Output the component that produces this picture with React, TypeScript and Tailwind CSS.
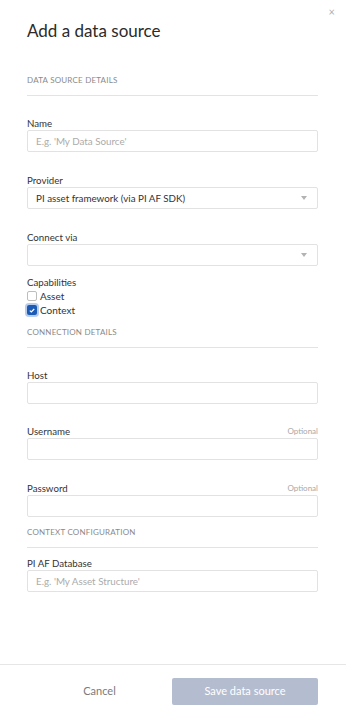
import React from "react";

function SectionHeader({ title }: { title: string }) {
  return <div className="border-b border-[#e3e3e3] pb-[9px] text-[8px] leading-[12px] tracking-[0.2px] text-[#8a8a8a] uppercase">
    {title}
  </div>;
}

interface FieldProps {
  label: string;
  placeholder?: string;
  value?: string;
  optional?: boolean;
  select?: boolean;
  className?: string;
}

function Field({ label, placeholder, value, optional, select, className }: FieldProps) {
  return <div className={className}>
    <div className="flex items-end justify-between h-[14px]">
      <span className="text-[9.7px] leading-[14px] text-[#333]">{label}</span>
      {optional && <span className="text-[8px] leading-[14px] text-[#a8a8a8]">Optional</span>}
    </div>
    <div className="flex items-center h-[22px] rounded-[2px] border border-[#e2e2e2] bg-white px-[8px]">
      {value && <span className="text-[9.8px] text-[#333]">{value}</span>}
      {!value && placeholder && <span className="text-[9.8px] text-[#ababab]">{placeholder}</span>}
      {select && <svg className="ml-auto mr-[2px]" width="6" height="4" viewBox="0 0 6 4">
        <path d="M0 0 H6 L3 4 Z" fill="#b3b3b3" />
      </svg>}
    </div>
  </div>;
}

function Checkbox({ label, checked }: { label: string; checked?: boolean }) {
  return <div className="flex items-center h-[14px] gap-[3px]">
    {checked ?
      <div className="flex items-center justify-center w-[10px] h-[10px] rounded-[2px] bg-[#1b5bb5] ring-2 ring-[#b8cdee]">
        <svg width="6" height="5" viewBox="0 0 6 5">
          <path d="M0.8 2.6 L2.3 4 L5.2 1" stroke="white" strokeWidth="1.2" fill="none" />
        </svg>
      </div>
      :
      <div className="w-[10px] h-[10px] rounded-[2px] border border-[#bdbdbd] bg-white" />
    }
    <span className="text-[10px] leading-[14px] text-[#333]">{label}</span>
  </div>;
}

export default function App() {
  return <div className="relative flex flex-col h-[720px] w-[346px] bg-white font-['Lato','Noto_Sans',sans-serif]">
    <button className="absolute right-[11px] top-[6px] text-[11px] leading-none text-[#b0b0b0]">×</button>

    <div className="flex-1 pl-[27px] pr-[28px] pt-[19px]">
      <h1 className="text-[17px] leading-[24px] text-[#2b2b2b]">Add a data source</h1>

      <div className="mt-[31px]">
        <SectionHeader title="Data source details" />
      </div>

      <Field className="mt-[20px]" label="Name" placeholder="E.g. 'My Data Source'" />
      <Field className="mt-[21px]" label="Provider" value="PI asset framework (via PI AF SDK)" select />
      <Field className="mt-[21px]" label="Connect via" select />

      <div className="mt-[9px]">
        <div className="text-[9.7px] leading-[14px] text-[#333]">Capabilities</div>
        <Checkbox label="Asset" />
        <Checkbox label="Context" checked />
      </div>

      <div className="mt-[9px]">
        <SectionHeader title="Connection details" />
      </div>

      <Field className="mt-[20px]" label="Host" />
      <Field className="mt-[20px]" label="Username" optional />
      <Field className="mt-[21px]" label="Password" optional />

      <div className="mt-[9px]">
        <SectionHeader title="Context configuration" />
      </div>

      <Field className="mt-[8px]" label="PI AF Database" placeholder="E.g. 'My Asset Structure'" />
    </div>

    <div className="flex items-start h-[56px] border-t border-[#e6e6e6] pl-[27px] pr-[28px] pt-[13px]">
      <button className="flex-1 h-[27px] text-[11px] text-[#7a7a7a]">Cancel</button>
      <button className="w-[146px] h-[27px] rounded-[2px] bg-[#b4bcd0] text-[11px] text-white">Save data source</button>
    </div>
  </div>;
}
